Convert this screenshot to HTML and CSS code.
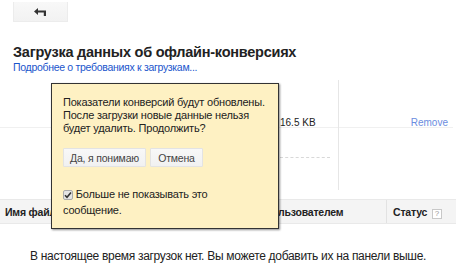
FILE: index.html
```html
<!DOCTYPE html>
<html lang="ru">
<head>
<meta charset="utf-8">
<title>Загрузка данных об офлайн-конверсиях</title>
<link rel="stylesheet" href="styles.css">
</head>
<body>
<div class="page">
  <div class="toolbar">
    <button class="back-btn" type="button" aria-label="Назад">
      <svg width="13" height="8" viewBox="0 0 13 8"><path d="M0 3.5 L4 0 L4 2.5 L12 2.5 L12 8 L9.8 8 L9.8 4.5 L4 4.5 L4 7 Z" fill="#333"/></svg>
    </button>
  </div>

  <h1 class="title">Загрузка данных об офлайн-конверсиях</h1>
  <a class="help-link" href="#">Подробнее о требованиях к загрузкам...</a>

  <div class="uploads">
    <div class="files">
      <div class="file-row">
        <span class="file-size">16.5 KB</span>
      </div>
      <div class="progress"></div>
    </div>
    <div class="actions">
      <div class="action-row"><a class="remove" href="#">Remove</a></div>
    </div>
  </div>

  <div class="table-head">
    <div class="th th-name">Имя файла</div>
    <div class="th th-user">Загружено пользователем</div>
    <div class="th th-status">Статус <span class="help-icon">?</span></div>
  </div>
  <p class="empty">В настоящее время загрузок нет. Вы можете добавить их на панели выше.</p>

  <div class="popup">
    <p class="popup-text">Показатели конверсий будут обновлены.<br>После загрузки новые данные нельзя<br>будет удалить. Продолжить?</p>
    <div class="popup-buttons">
      <button class="btn btn-ok" type="button">Да, я понимаю</button>
      <button class="btn btn-cancel" type="button">Отмена</button>
    </div>
    <p class="popup-check"><span class="checkbox"><svg width="8" height="8" viewBox="0 0 8 8"><path d="M1 4.2 L3 6.3 L7 1.5" fill="none" stroke="#333" stroke-width="1.6"/></svg></span> Больше не показывать это<br>сообщение.</p>
  </div>
</div>
</body>
</html>
```

FILE: styles.css
```css
* { box-sizing: border-box; }
html, body { margin: 0; padding: 0; }
body {
  font-family: "Liberation Sans", Arial, sans-serif;
  color: #222;
  background: #fff;
}
.page {
  position: relative;
  width: 456px;
  height: 266px;
  overflow: hidden;
}
.toolbar {
  padding: 2px 0 0 13px;
  height: 22px;
}
.back-btn {
  display: flex;
  align-items: center;
  justify-content: center;
  width: 55px;
  height: 20px;
  padding: 0;
  border: 1px solid #ececec;
  border-top: none;
  background: linear-gradient(#f8f8f8, #f2f2f2);
}
.title {
  margin: 21px 0 0 13px;
  font-size: 14.5px;
  line-height: 18px;
  letter-spacing: -0.25px;
  font-weight: bold;
  color: #222;
}
.help-link {
  display: block;
  margin-left: 13px;
  font-size: 10.5px;
  line-height: 13px;
  letter-spacing: -0.3px;
  color: #1a55cc;
  text-decoration: none;
}
.uploads {
  display: grid;
  grid-template-columns: 338px 1fr;
  margin-top: 6px;
  height: 110px;
}
.file-row {
  height: 48px;
  padding: 32px 0 0 280px;
  border-bottom: 1px solid #f0f0f0;
}
.file-size, .remove {
  font-size: 10px;
  line-height: 12px;
}
.file-size { color: #222; }
.progress {
  margin: 29px 0 0 280px;
  width: 50px;
  border-top: 1px dashed #d8d8d8;
}
.actions {
  border-left: 1px solid #e6e6e6;
}
.action-row {
  height: 48px;
  padding: 32px 5px 0 0;
  margin-right: 3px;
  text-align: right;
  border-bottom: 1px solid #f0f0f0;
}
.remove {
  color: #6b8de0;
  text-decoration: none;
}
.table-head {
  display: grid;
  grid-template-columns: 203px 183px 1fr;
  margin-top: 9px;
  background: #f4f4f4;
  border-top: 1px solid #e9e9e9;
  border-bottom: 1px solid #e9e9e9;
}
.th {
  padding: 6px 6px 4px;
  font-size: 10.5px;
  line-height: 13px;
  letter-spacing: -0.2px;
  font-weight: bold;
  color: #222;
  white-space: nowrap;
}
.th-name { padding-left: 5px; }
.th-user { text-align: right; padding-right: 52px; }
.th-user, .th-status { border-left: 1px solid #e2e2e2; }
.help-icon {
  display: inline-block;
  width: 10px;
  height: 10px;
  margin-left: 2px;
  border: 1px solid #c8c8c8;
  background: #fff;
  color: #999;
  font-size: 8px;
  line-height: 8px;
  letter-spacing: 0;
  text-align: center;
  font-weight: normal;
  vertical-align: 0;
}
.empty {
  margin: 24px 0 0;
  text-align: center;
  font-size: 12px;
  line-height: 16px;
  letter-spacing: -0.3px;
  color: #222;
}
.popup {
  position: absolute;
  left: 51px;
  top: 83px;
  width: 228px;
  height: 146px;
  padding: 12px 6px 0 11px;
  background: #fef1c3;
  border: 1px solid #333;
  box-shadow: 1px 1px 2px rgba(0, 0, 0, 0.45);
}
.popup-text {
  margin: 0;
  font-size: 11px;
  line-height: 13px;
  letter-spacing: -0.2px;
  color: #222;
  white-space: nowrap;
}
.popup-buttons {
  display: flex;
  gap: 4px;
  margin-top: 13px;
}
.btn {
  height: 19px;
  padding: 0;
  font-family: "Liberation Sans", Arial, sans-serif;
  font-size: 10.5px;
  letter-spacing: -0.2px;
  color: #444;
  white-space: nowrap;
  background: linear-gradient(#f8f8f8, #f1f1f1);
  border: 1px solid #e3e3e3;
  border-radius: 1px;
}
.btn-ok { width: 83px; }
.btn-cancel { width: 53px; }
.popup-check {
  margin: 19px 0 0;
  font-size: 11px;
  line-height: 16px;
  letter-spacing: -0.2px;
  color: #222;
  white-space: nowrap;
}
.checkbox {
  display: inline-flex;
  align-items: center;
  justify-content: center;
  width: 10px;
  height: 10px;
  border: 1px solid #aaa;
  border-radius: 2px;
  background: #e4e4e4;
  vertical-align: -1px;
}
```
